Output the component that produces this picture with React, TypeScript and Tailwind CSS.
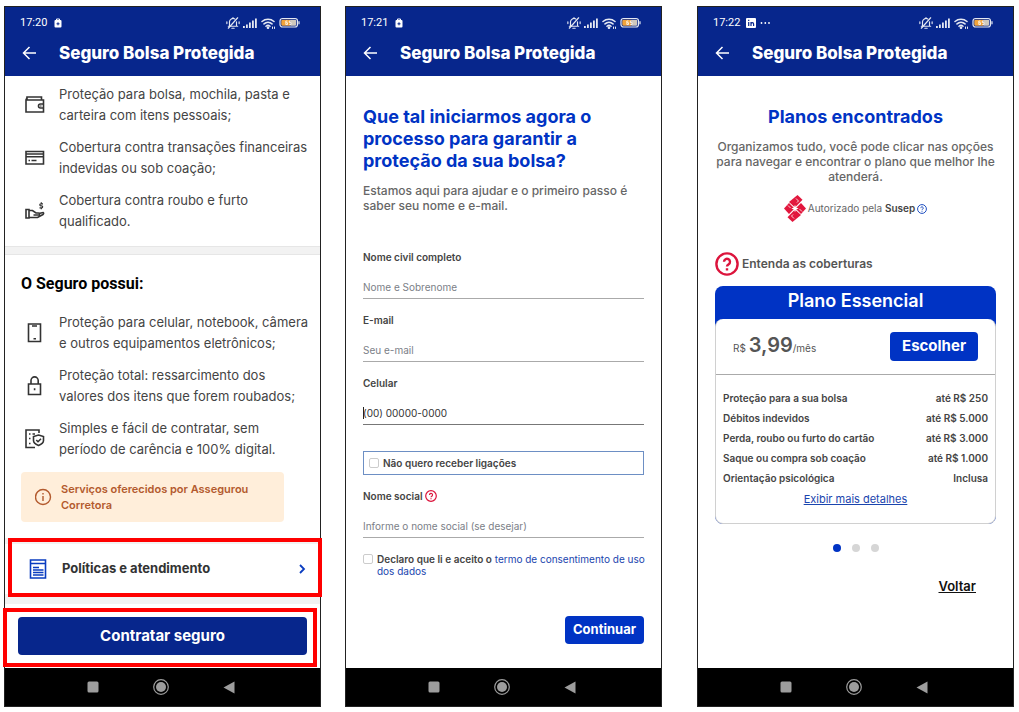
import type { ReactNode } from "react";

function StatusIcons() {
  return (
    <div className="flex items-center gap-[3px] text-[#e5e8f2]">
      <svg width="14" height="14" viewBox="0 0 24 24" fill="none" stroke="currentColor" strokeWidth="2" strokeLinecap="round" aria-hidden="true">
        <path d="M6 16V10a6 6 0 0 1 9-5M18 10v6M4 17.500h16M10 21h4M12 2.500v1" />
        <path d="M4 21 20 3M1.500 10v3M22.500 10v3" />
      </svg>
      <svg width="15" height="12" viewBox="0 0 15 12" fill="currentColor" aria-hidden="true">
        <rect x="0" y="9" width="1.800" height="2" />
        <rect x="3" y="7.500" width="1.800" height="3.500" />
        <rect x="6" y="5.500" width="1.800" height="5.500" />
        <rect x="9" y="3.500" width="1.800" height="7.500" />
        <rect x="12" y="1.500" width="1.800" height="9.500" />
      </svg>
      <svg width="15" height="12" viewBox="0 0 15 12" fill="none" stroke="currentColor" strokeWidth="1.500" strokeLinecap="round" aria-hidden="true">
        <path d="M1 4.500a9 9 0 0 1 12 0M3 6.900a6 6 0 0 1 8 0M5 9.200a3 3 0 0 1 4 0" />
        <circle cx="7" cy="10.700" r=".6" fill="currentColor" />
        <path d="M11.500 10v1.500M13.500 10v1.500" strokeWidth="1" />
      </svg>
      <svg width="21" height="12" viewBox="0 0 21 12" aria-hidden="true">
        <rect x="1" y="1.500" width="17.500" height="8.500" rx="2.500" fill="#07268c" stroke="#e5e8f2" strokeWidth="1.200" />
        <path d="M3.500 2.800H11.500v6H3.500a1.200 1.200 0 0 1-1.200-1.200V4a1.200 1.200 0 0 1 1.200-1.200Z" fill="#f2a33a" />
        <path d="M11.500 2.800H16a1.200 1.200 0 0 1 1.200 1.200v3.600A1.200 1.200 0 0 1 16 8.800H11.500Z" fill="#cfc8bd" />
        <path d="M8.500 4H6.800v3.500h1.700V5.700H7M12 4h-1.700v1.600H12v1.900h-1.700" fill="none" stroke="#fff" strokeWidth=".8" />
        <path d="M20 4.300v3" stroke="#e5e8f2" strokeWidth="1.200" />
      </svg>
    </div>
  );
}

function LockBadge() {
  return (
    <svg width="8" height="10" viewBox="0 0 8 10" className="ml-[7px]" aria-hidden="true">
      <path d="M2.500 2.500V1h3v1.500" fill="none" stroke="#fff" strokeWidth="1" />
      <rect x=".5" y="2" width="7" height="7.500" rx="1" fill="#fff" />
      <path d="M4 4.300v3M2.500 5.800h3" stroke="#07268c" strokeWidth="1" />
    </svg>
  );
}

function LinkedinBadge() {
  return (
    <svg width="24" height="10" viewBox="0 0 24 10" className="ml-[6px]" aria-hidden="true">
      <rect width="10" height="10" rx="1" fill="#fff" />
      <path d="M2.700 4v4M2.700 1.700v1.200M5 8V4M5 6a1.300 1.300 0 0 1 2.600 0v2" fill="none" stroke="#07268c" strokeWidth="1.200" />
      <g fill="#fff">
        <circle cx="15.500" cy="5" r=".9" />
        <circle cx="19.300" cy="5" r=".9" />
        <circle cx="23" cy="5" r=".9" />
      </g>
    </svg>
  );
}

function Phone({ time, badge, children }: { time: string; badge: ReactNode; children: ReactNode }) {
  return (
    <section className="flex min-w-0 flex-1 flex-col border border-[#222] bg-white">
      <header className="bg-[#07268c] pt-2 pb-[11px] text-white">
        <div className="flex h-4 items-center pr-5 pl-[15px]">
          <span className="font-[Roboto,sans-serif] text-[11px]">{time}</span>
          {badge}
          <div className="ml-auto">
            <StatusIcons />
          </div>
        </div>
        <div className="mt-2.5 flex h-6 items-center gap-[22px] pl-[17px]">
          <button type="button" aria-label="Voltar à tela anterior">
            <svg width="15" height="14" viewBox="0 0 15 14" fill="none" stroke="currentColor" strokeWidth="1.500" aria-hidden="true">
              <path d="M14 7H1.500M7.500 1 1.500 7l6 6" />
            </svg>
          </button>
          <h1 className="text-[17px] leading-6 font-extrabold whitespace-nowrap">Seguro Bolsa Protegida</h1>
        </div>
      </header>
      <div className="flex flex-1 flex-col">{children}</div>
      <nav className="flex h-[38px] items-center justify-center gap-[54px] bg-black pr-1 text-[#9d9d9d]" aria-label="Navegação do sistema">
        <button type="button" aria-label="Recentes">
          <svg width="12" height="12" viewBox="0 0 12 12" fill="currentColor" aria-hidden="true">
            <rect x=".5" y=".5" width="11" height="11" rx="1.500" />
          </svg>
        </button>
        <button type="button" aria-label="Início">
          <svg width="16" height="16" viewBox="0 0 16 16" fill="currentColor" aria-hidden="true">
            <circle cx="8" cy="8" r="7.300" fill="none" stroke="currentColor" strokeWidth="1.200" />
            <circle cx="8" cy="8" r="5" />
          </svg>
        </button>
        <button type="button" aria-label="Voltar">
          <svg width="12" height="13" viewBox="0 0 12 13" fill="currentColor" aria-hidden="true">
            <path d="M11.500.5v12L.5 6.500Z" />
          </svg>
        </button>
      </nav>
    </section>
  );
}

function LineIcon({ children }: { children: ReactNode }) {
  return (
    <svg width="20" height="20" viewBox="0 0 20 20" fill="none" stroke="#333" strokeWidth="1.600" className="shrink-0" aria-hidden="true">
      {children}
    </svg>
  );
}

const coverages = [
  {
    text: "Proteção para bolsa, mochila, pasta e\ncarteira com itens pessoais;",
    icon: (
      <LineIcon>
        <path d="M2 5V2h14.500v3M1 5h17.500v12H1zM1 5l1-2.500M18.500 9h-3a2 2 0 0 0 0 4h3M15.800 10.500v1" />
      </LineIcon>
    ),
  },
  {
    text: "Cobertura contra transações financeiras\nindevidas ou sob coação;",
    icon: (
      <LineIcon>
        <path d="M1 3.500h17.500v12.500H1zM1 6h17.500M1 8.700h17.500M3.500 12.500H5M6.500 12.500h5" />
      </LineIcon>
    ),
  },
  {
    text: "Cobertura contra roubo e furto\nqualificado.",
    icon: (
      <LineIcon>
        <path d="M1 8.500h3v8.500H1zM4 9.500h3.500l3.500 2.500h2.500c1.500 0 1.500 2 0 2H8.500M14 12.500l4-1c1 .5.700 1.500 0 2L12.500 16.500H4" />
        <path d="M18 2.800h-2.300c-1.200 0-1.200 2 0 2h1c1.300 0 1.300 2 0 2h-2.200M16.300 1.300v1.500M16.300 6.800v1.500" strokeWidth="1.200" />
      </LineIcon>
    ),
  },
];

const benefits = [
  {
    text: "Proteção para celular, notebook, câmera\ne outros equipamentos eletrônicos;",
    icon: (
      <LineIcon>
        <path d="M3.500 1h12v17.500h-12zM7 3h5M8.500 15.800h2.500" />
      </LineIcon>
    ),
  },
  {
    text: "Proteção total: ressarcimento dos\nvalores dos itens que forem roubados;",
    icon: (
      <LineIcon>
        <path d="M3.500 8h12v10.500h-12zM6 8V4.500a3.600 3.600 0 0 1 7.200 0V8M9.600 12.300v2" />
      </LineIcon>
    ),
  },
  {
    text: "Simples e fácil de contratar, sem\nperíodo de carência e 100% digital.",
    icon: (
      <LineIcon>
        <path d="M14 4V1H1v17.500h9M4 5h1.500M7.500 5H10M4 9.500h1.500M4 14.500h1.500" />
        <path d="M13.500 6 18.500 7.500v4c0 2.500-2.500 4-5 5-2.500-1-5-2.500-5-5v-4ZM11.300 11l1.700 1.700 3-3" />
      </LineIcon>
    ),
  },
];

function FeatureList({ items }: { items: typeof coverages }) {
  return (
    <ul className="flex flex-col gap-[11px]">
      {items.map((item) => (
        <li key={item.text} className="flex items-center gap-3.5 pl-5">
          {item.icon}
          <p className="flex-1 text-[13px] leading-[21px] whitespace-pre-line text-[#444]">{item.text}</p>
        </li>
      ))}
    </ul>
  );
}

function Highlight({ className }: { className: string }) {
  return <span className={`pointer-events-none absolute z-10 border-4 border-[#f00] ${className}`} />;
}

function InsuranceScreen() {
  return (
    <>
      <div className="pt-2 pb-3.5">
        <FeatureList items={coverages} />
      </div>
      <div className="h-[9px] border-y border-[#e6e6e6] bg-[#f2f2f2]" />
      <div className="pt-[18px] pb-4">
        <h2 className="mb-[17px] pl-4 font-[Roboto,sans-serif] text-[16px] leading-[22px] font-bold text-black">O Seguro possui:</h2>
        <FeatureList items={benefits} />
        <div className="mt-3 mr-9 ml-4 flex items-center gap-2 rounded bg-[#ffeeda] py-[9px] pl-3.5 text-[#b35a2e]">
          <svg width="18" height="18" viewBox="0 0 18 18" fill="none" stroke="currentColor" strokeWidth="1.400" className="shrink-0" aria-hidden="true">
            <circle cx="8" cy="9" r="7.500" />
            <path d="M8 8v5M8 5v1.500" />
          </svg>
          <p className="flex-1 pr-8 text-[11px] leading-4 font-semibold">Serviços oferecidos por Assegurou Corretora</p>
        </div>
      </div>
      <div className="relative border-t-[6px] border-b-[10px] border-[#f2f2f2]">
        <a href="#politicas" className="flex h-[50px] items-center pr-3.5 pl-6">
          <svg width="18" height="20" viewBox="0 0 18 20" fill="none" stroke="#0a3cc0" strokeWidth="1.600" aria-hidden="true">
            <path d="M1.500 1h15v18h-15zM1.500 4.500h15M4 8.500h6M4 11h3M7 11h7.500M4 13.500h10.500M4 16h10.500" />
          </svg>
          <span className="ml-[15px] text-[13px] font-bold text-[#333]">Políticas e atendimento</span>
          <svg width="7" height="10" viewBox="0 0 7 10" fill="none" stroke="#0a3cc0" strokeWidth="1.800" className="ml-auto" aria-hidden="true">
            <path d="m1 1 4 4-4 4" />
          </svg>
        </a>
        <Highlight className="-top-[6px] -right-[2px] -bottom-[3px] left-[3px]" />
      </div>
      <div className="relative flex flex-1 flex-col justify-center px-[13px]">
        <button type="button" className="h-[38px] rounded bg-[#07268c] text-[15px] font-bold text-white">
          Contratar seguro
        </button>
        <Highlight className="top-1 right-[3px] bottom-px -left-[2px]" />
      </div>
    </>
  );
}

function QuestionIcon({ className }: { className: string }) {
  return (
    <svg viewBox="0 0 24 24" fill="none" stroke="currentColor" strokeWidth="2.400" className={className} aria-hidden="true">
      <circle cx="12" cy="12" r="10.600" />
      <path d="M9 9.800a3 3 0 1 1 4.700 2.500c-1.200.8-1.700 1.200-1.700 2.200M12 16.300v2.200" />
    </svg>
  );
}

interface FieldProps {
  id: string;
  label: string;
  placeholder?: string;
  value?: string;
  help?: boolean;
}

function Field({ id, label, placeholder, value, help }: FieldProps) {
  return (
    <div className="relative">
      <div className="flex h-3.5 items-center gap-0.5">
        <label htmlFor={id} className="text-[10px] leading-[14px] font-semibold text-[#444]">
          {label}
        </label>
        {help && (
          <button type="button" aria-label="Ajuda sobre nome social" className="text-[#dc143c]">
            <QuestionIcon className="h-3 w-3" />
          </button>
        )}
      </div>
      <input
        id={id}
        type="text"
        placeholder={placeholder}
        defaultValue={value}
        className={
          value
            ? "mt-[11px] block h-6 w-full border-b border-[#777] text-[10px] text-[#333] outline-none"
            : "mt-[11px] block h-6 w-full border-b border-[#aaa] text-[10px] text-[#333] outline-none placeholder:text-[#7b8087]"
        }
      />
      {value && <span className="absolute bottom-1.5 left-0 h-3 w-px bg-[#222]" />}
    </div>
  );
}

const checkbox = "h-2.5 w-2.5 shrink-0 appearance-none rounded-[2px] border border-[#ccc] bg-white checked:bg-[#0033c4]";

function FormScreen() {
  return (
    <form className="flex flex-1 flex-col px-[17px] pt-[30px]" onSubmit={(e) => e.preventDefault()}>
      <h2 className="text-[18px] leading-[22px] font-bold text-[#0033c4]">
        Que tal iniciarmos agora o processo para garantir a proteção da sua bolsa?
      </h2>
      <p className="mt-[11px] text-[12px] leading-[15px] font-medium text-[#666]">
        Estamos aqui para ajudar e o primeiro passo é saber seu nome e e-mail.
      </p>
      <div className="mt-[37px] flex flex-col gap-3.5">
        <Field id="nome" label="Nome civil completo" placeholder="Nome e Sobrenome" />
        <Field id="email" label="E-mail" placeholder="Seu e-mail" />
        <Field id="celular" label="Celular" value="(00) 00000-0000" />
      </div>
      <label className="mt-[26px] flex h-6 items-center gap-1 border border-[#6d8fc4] pl-[5px] text-[10px] font-semibold text-[#444]">
        <input type="checkbox" className={checkbox} />
        Não quero receber ligações
      </label>
      <div className="mt-3.5">
        <Field id="social" label="Nome social" placeholder="Informe o nome social (se desejar)" help />
      </div>
      <div className="mt-[15px] -mr-3 flex items-start gap-1 text-[10px] leading-3 text-[#444]">
        <input id="aceite" type="checkbox" className={`${checkbox} mt-px`} />
        <p>
          <label htmlFor="aceite" className="font-semibold">
            Declaro que li e aceito o
          </label>{" "}
          <a href="#termo" className="text-[#1a45ae]">
            termo de consentimento de uso dos dados
          </a>
        </p>
      </div>
      <button type="submit" className="mt-auto mb-6 h-7 self-end rounded bg-[#0033c4] px-2 text-[13px] font-bold text-white">
        Continuar
      </button>
    </form>
  );
}

const planRows = [
  ["Proteção para a sua bolsa", "até R$ 250"],
  ["Débitos indevidos", "até R$ 5.000"],
  ["Perda, roubo ou furto do cartão", "até R$ 3.000"],
  ["Saque ou compra sob coação", "até R$ 1.000"],
  ["Orientação psicológica", "Inclusa"],
];

function SusepLogo() {
  return (
    <svg width="22" height="27" viewBox="0 0 22 27" fill="#e2173d" aria-hidden="true">
      <path d="M13.500 0 18.500 4.800 11 12.500 5 7Z" />
      <path d="M8.500 27 3.500 22.200 11 14.500 17 20Z" />
      <path d="M5 8 10.500 13.500 5 19 0 13.500Z" />
      <path d="M17 8 22 13.500 17 19 11.500 13.500Z" />
      <path d="m11 9.800 1 2.700 2.700 1-2.700 1-1 2.700-1-2.700-2.700-1 2.700-1Z" fill="#fff" />
      <path
        d="M12 3.500 14.500 6M14.500 6 13 7.500M10 23.500 7.500 21M7.500 21 9 19.500M4 10.500 6.500 13M18 16.500 15.500 14"
        fill="none"
        stroke="#fff"
        strokeWidth=".8"
      />
    </svg>
  );
}

function PlansScreen() {
  return (
    <div className="flex flex-1 flex-col px-[17px] pt-[30px]">
      <h2 className="text-center text-[18px] leading-[22px] font-bold text-[#0033c4]">Planos encontrados</h2>
      <p className="-mx-2 mt-[11px] text-center text-[12px] leading-[15px] font-medium text-[#666]">
        Organizamos tudo, você pode clicar nas opções para navegar e encontrar o plano que melhor lhe atenderá.
      </p>
      <div className="mt-[11px] flex items-center justify-center gap-0.5 text-[10px] text-[#666]">
        <SusepLogo />
        <span>
          Autorizado pela <strong className="font-semibold text-[#444]">Susep</strong>
        </span>
        <button type="button" aria-label="Sobre a Susep" className="text-[#1f4fc0]">
          <QuestionIcon className="h-2.5 w-2.5" />
        </button>
      </div>
      <a href="#coberturas" className="mt-[30px] flex items-center gap-[3px] text-[12px] font-semibold text-[#555]">
        <QuestionIcon className="h-6 w-6 text-[#dc143c]" />
        Entenda as coberturas
      </a>
      <article className="mt-2.5 rounded-lg bg-[#0033c4]">
        <h3 className="h-[33px] text-center text-[18px] leading-[30px] font-semibold text-white">Plano Essencial</h3>
        <div className="rounded-lg border-x border-b border-[#d0d0d0] bg-white">
          <div className="flex h-14 items-center justify-between border-b border-[#aaa] pr-[17px] pl-[17px]">
            <p className="text-[10px] leading-6 text-[#555]">
              R$ <strong className="text-[20px] font-semibold text-[#555]">3,99</strong>/mês
            </p>
            <button type="button" className="h-[29px] rounded bg-[#0033c4] px-3 text-[15px] font-bold text-white">
              Escolher
            </button>
          </div>
          <table className="mx-[7px] mt-[13px] w-[calc(100%-14px)] text-[10px] leading-5 text-[#444]">
            <tbody>
              {planRows.map(([name, value]) => (
                <tr key={name}>
                  <th scope="row" className="text-left font-semibold">
                    {name}
                  </th>
                  <td className="text-right font-semibold">{value}</td>
                </tr>
              ))}
            </tbody>
          </table>
          <div className="flex justify-center pt-[3px] pb-4">
            <a href="#detalhes" className="text-[11px] leading-4 text-[#1a45ae] underline">
              Exibir mais detalhes
            </a>
          </div>
        </div>
      </article>
      <div className="mt-5 flex justify-center gap-[11px]">
        <button type="button" aria-label="Plano 1" className="h-2 w-2 rounded-full bg-[#0033c4]" />
        <button type="button" aria-label="Plano 2" className="h-2 w-2 rounded-full bg-[#d6d6d6]" />
        <button type="button" aria-label="Plano 3" className="h-2 w-2 rounded-full bg-[#d6d6d6]" />
      </div>
      <a href="#voltar" className="mt-6 mr-5 self-end text-[13px] leading-5 font-semibold text-[#111] underline">
        Voltar
      </a>
    </div>
  );
}

export default function App() {
  return (
    <main className="flex min-h-screen bg-white pt-1.5 pr-[5px] pb-[5px] pl-1 font-[Inter,sans-serif]">
      <Phone time="17:20" badge={<LockBadge />}>
        <InsuranceScreen />
      </Phone>
      <div className="w-6 shrink-0" />
      <Phone time="17:21" badge={<LockBadge />}>
        <FormScreen />
      </Phone>
      <div className="w-[35px] shrink-0" />
      <Phone time="17:22" badge={<LinkedinBadge />}>
        <PlansScreen />
      </Phone>
    </main>
  );
}
